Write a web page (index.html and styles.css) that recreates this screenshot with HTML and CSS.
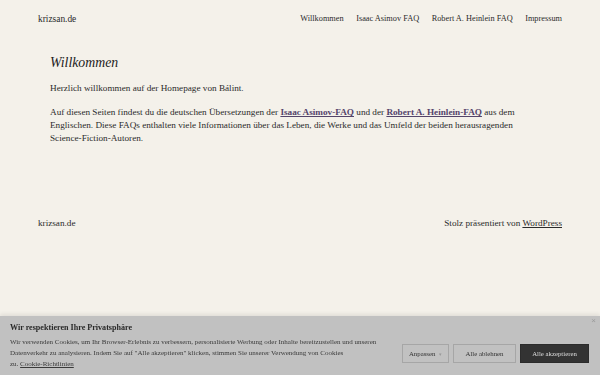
FILE: index.html
```html
<!DOCTYPE html>
<html lang="de">
<head>
  <meta charset="UTF-8">
  <meta name="viewport" content="width=device-width, initial-scale=1">
  <title>krizsan.de</title>
  <link rel="stylesheet" href="styles.css">
</head>
<body>
  <div class="page">
    <header class="site-header">
      <a class="site-title" href="#">krizsan.de</a>
      <nav class="site-nav">
        <a href="#">Willkommen</a>
        <a href="#">Isaac Asimov FAQ</a>
        <a href="#">Robert A. Heinlein FAQ</a>
        <a href="#">Impressum</a>
      </nav>
    </header>

    <main class="content">
      <h1 class="entry-title">Willkommen</h1>
      <p>Herzlich willkommen auf der Homepage von Bálint.</p>
      <p>Auf diesen Seiten findest du die deutschen Übersetzungen der <a href="#">Isaac Asimov-FAQ</a> und der <a href="#">Robert A. Heinlein-FAQ</a> aus dem Englischen. Diese FAQs enthalten viele Informationen über das Leben, die Werke und das Umfeld der beiden herausragenden Science-Fiction-Autoren.</p>
    </main>

    <footer class="site-footer">
      <span class="site-title">krizsan.de</span>
      <span class="credit">Stolz präsentiert von <a href="#">WordPress</a></span>
    </footer>
  </div>

  <div class="cookie-bar">
    <button class="cookie-close" aria-label="Schließen">×</button>
    <div class="cookie-text">
      <div class="cookie-title">Wir respektieren Ihre Privatsphäre</div>
      <p>Wir verwenden Cookies, um Ihr Browser-Erlebnis zu verbessern, personalisierte Werbung oder Inhalte bereitzustellen und unseren Datenverkehr zu analysieren. Indem Sie auf "Alle akzeptieren" klicken, stimmen Sie unserer Verwendung von Cookies <span class="nowrap">zu. <a href="#">Cookie-Richtlinien</a></span></p>
    </div>
    <div class="cookie-buttons">
      <button class="btn">Anpassen <span class="caret">▾</span></button>
      <button class="btn">Alle ablehnen</button>
      <button class="btn btn-dark">Alle akzeptieren</button>
    </div>
  </div>
</body>
</html>
```

FILE: styles.css
```css
* {
  box-sizing: border-box;
  margin: 0;
  padding: 0;
}

body {
  background: #f4f1ea;
  font-family: 'Liberation Serif', 'DejaVu Serif', serif;
  color: #2b2b2b;
  height: 375px;
  overflow: hidden;
}

a {
  color: inherit;
  text-decoration: none;
}

.page {
  padding: 0 38px;
}

.site-header {
  display: flex;
  justify-content: space-between;
  align-items: center;
  height: 37px;
  font-size: 8.3px;
}

.site-header .site-title {
  font-size: 9.4px;
}

.site-nav {
  display: flex;
  gap: 12.5px;
}

.content {
  padding: 16px 12px 0;
  width: 504px;
}

.entry-title {
  font-style: italic;
  font-weight: normal;
  font-size: 13.8px;
  line-height: 20px;
  margin-bottom: 9px;
  color: #222;
}

.content p {
  font-size: 9.2px;
  line-height: 13px;
  margin-bottom: 11px;
}

.content p a {
  font-weight: bold;
  color: #54446a;
  text-decoration: underline;
}

.site-footer {
  display: flex;
  justify-content: space-between;
  align-items: center;
  margin-top: 73px;
  font-size: 9.2px;
}

.site-footer a {
  text-decoration: underline;
}

/* cookie banner */
.cookie-bar {
  position: fixed;
  left: 0;
  right: 0;
  bottom: 0;
  height: 59px;
  background: #c1c1c1;
  box-shadow: 0 -2px 4px rgba(0, 0, 0, 0.08);
  display: flex;
  align-items: flex-start;
  justify-content: space-between;
  padding: 7px 11px 0 10px;
  font-family: 'Liberation Serif', serif;
  color: #2a2a2a;
}

.cookie-title {
  font-weight: bold;
  font-size: 8.1px;
  line-height: 10px;
  margin-bottom: 4px;
}

.cookie-text {
  width: 372px;
}

.cookie-text p {
  font-size: 7px;
  line-height: 11px;
  color: #3a3a3a;
}

.cookie-text a {
  text-decoration: underline;
}

.nowrap {
  white-space: nowrap;
}

.cookie-buttons {
  display: flex;
  gap: 4px;
  margin-top: 21px;
}

.btn {
  font-family: inherit;
  font-size: 6.8px;
  height: 19px;
  padding: 0;
  white-space: nowrap;
  background: #c1c1c1;
  border: 1px solid #a6a6a6;
  color: #333;
  cursor: pointer;
}

.btn:nth-child(1) {
  width: 47px;
}

.btn:nth-child(2) {
  width: 63px;
}

.btn .caret {
  color: #999;
  font-size: 5px;
  margin-left: 2px;
}

.btn-dark {
  width: 69px;
  background: #333;
  border-color: #2c2c2c;
  color: #ddd;
}

.cookie-close {
  position: absolute;
  top: 1px;
  right: 4px;
  background: none;
  border: none;
  color: #9a9a9a;
  font-size: 8px;
  line-height: 8px;
}
```
